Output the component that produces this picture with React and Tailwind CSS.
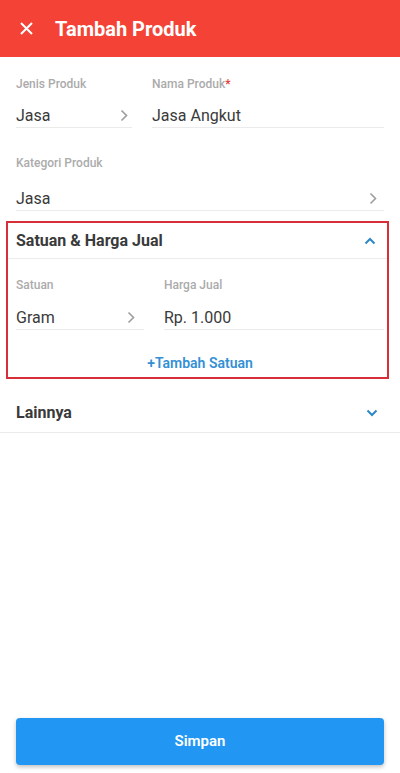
import React from 'react';

const ChevronRight = () => (
  <svg width="8" height="13" viewBox="0 0 8 13" fill="none" className="shrink-0">
    <path d="M1.5 1.5 6.5 6.5 1.5 11.5" stroke="#9e9e9e" strokeWidth="1.6" />
  </svg>
);

const ChevronV = ({ up }) => (
  <svg width="12" height="8" viewBox="0 0 12 8" fill="none" className="shrink-0">
    <path d={up ? 'M1.5 6.5 6 2 10.5 6.5' : 'M1.5 1.5 6 6 10.5 1.5'} stroke="#2f86c8" strokeWidth="2" />
  </svg>
);

const Field = ({ label, required, value, select, labelGap, rowH, chevronPad = 'pr-1' }) => (
  <div className="flex flex-col">
    <span className="text-[12px] leading-4 font-medium text-[#ababab]">
      {label}
      {required && <span className="text-[#e53935]">*</span>}
    </span>
    <div className={`${labelGap} ${rowH} flex items-center justify-between border-b border-[#ebebeb] ${chevronPad}`}>
      <span className="text-[16px] text-[#3a3a3a]">{value}</span>
      {select && <ChevronRight />}
    </div>
  </div>
);

const App = () => {
  return (
    <div className="h-[773px] flex flex-col bg-white font-['Roboto',sans-serif]">
      {/* Header */}
      <div className="h-[57px] shrink-0 bg-[#f44336] flex items-center px-5">
        <svg width="13" height="13" viewBox="0 0 13 13" fill="none">
          <path d="M1 1 12 12M12 1 1 12" stroke="white" strokeWidth="2" />
        </svg>
        <h1 className="ml-[22px] text-[20px] font-bold text-white">Tambah Produk</h1>
      </div>

      {/* Jenis / Nama */}
      <div className="px-4 pt-[19px]">
        <div className="grid grid-cols-[116px_1fr] gap-x-5">
          <Field label="Jenis Produk" value="Jasa" select labelGap="mt-3" rowH="h-6" />
          <Field label="Nama Produk" required value="Jasa Angkut" labelGap="mt-3" rowH="h-6" />
        </div>
        <div className="mt-[27px]">
          <Field label="Kategori Produk" value="Jasa" select labelGap="mt-4" rowH="h-6" chevronPad="pr-[7px]" />
        </div>
      </div>

      {/* Satuan & Harga Jual */}
      <div className="mt-[10px] ml-[6px] mr-[11px] border-2 border-[#d72f3a]">
        <div className="h-[36px] flex items-center justify-between border-b border-[#ebebeb] pl-2 pr-[11px]">
          <span className="text-[16px] font-bold text-[#3a3a3a]">Satuan &amp; Harga Jual</span>
          <ChevronV up />
        </div>
        <div className="pl-2 pr-[3px] pt-[18px]">
          <div className="grid grid-cols-[128px_1fr] gap-x-5">
            <Field label="Satuan" value="Gram" select labelGap="mt-[13px]" rowH="h-6" chevronPad="pr-[9px]" />
            <Field label="Harga Jual" value="Rp. 1.000" labelGap="mt-[13px]" rowH="h-6" />
          </div>
          <div className="mt-[23px] pb-1 text-center text-[14px] leading-5 font-semibold text-[#3390d4]">
            +Tambah Satuan
          </div>
        </div>
      </div>

      {/* Lainnya */}
      <div className="mt-[15px] h-[39px] flex items-center justify-between border-b border-[#ebebeb] pl-4 pr-[22px]">
        <span className="text-[16px] font-bold text-[#3a3a3a]">Lainnya</span>
        <ChevronV />
      </div>

      <div className="flex-1" />

      <div className="px-4 pb-2">
        <button className="w-full h-[47px] rounded-[4px] bg-[#2196f3] shadow-[0_2px_4px_rgba(0,0,0,0.25)] text-white text-[15px] font-semibold">
          Simpan
        </button>
      </div>
    </div>
  );
};

export default App;
